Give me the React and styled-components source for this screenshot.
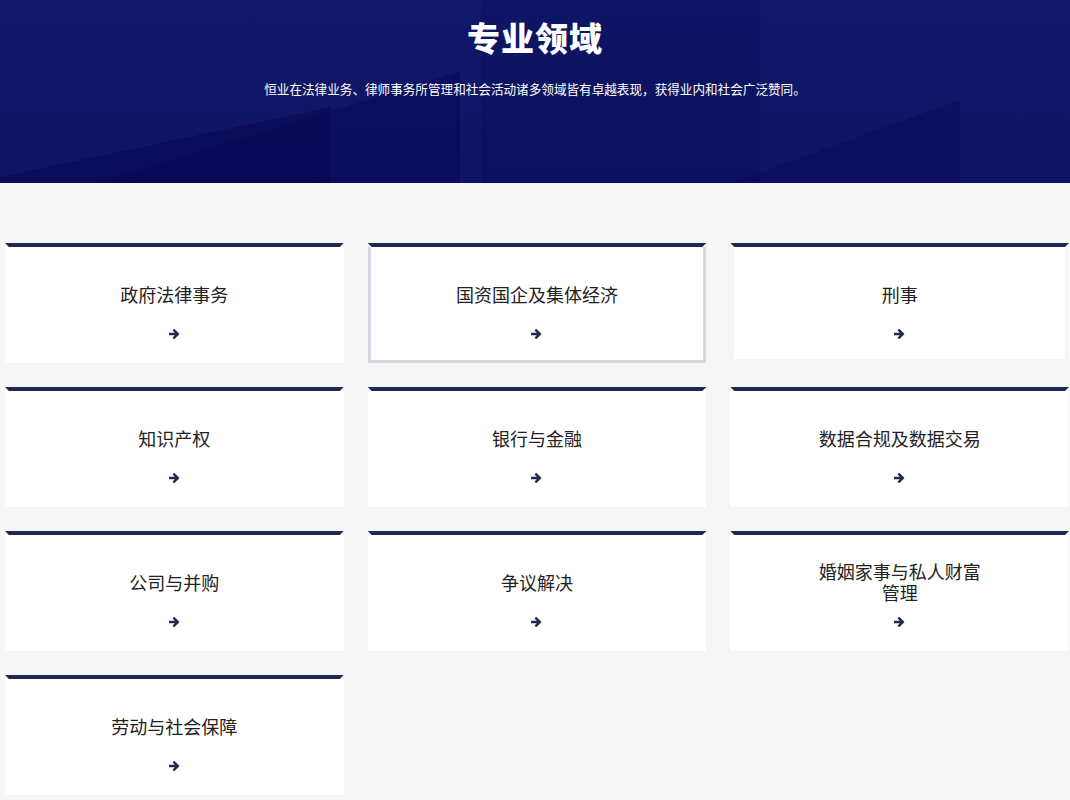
import styled, { createGlobalStyle } from 'styled-components';

const GlobalStyle = createGlobalStyle`
  body {
    margin: 0;
    background: #f6f6f6;
    font-family: "Noto Sans CJK SC", "Noto Sans", sans-serif;
  }
`;

// 领域列表
const AREAS = [
    '政府法律事务',
    '国资国企及集体经济',
    '刑事',
    '知识产权',
    '银行与金融',
    '数据合规及数据交易',
    '公司与并购',
    '争议解决',
    '婚姻家事与私人财富管理',
    '劳动与社会保障',
];

const ArrowIcon = () => (
    <svg width="11" height="10" viewBox="0 0 11 10">
        <path d="M1 5 H8.5 M5.2 1.4 L8.8 5 L5.2 8.6" fill="none" stroke="currentColor" strokeWidth="2.4" strokeLinecap="square" />
    </svg>
);

const App = () => {
    return (
        <Page>
            <GlobalStyle />
            <Hero>
                <HeroTitle>专业领域</HeroTitle>
                <HeroText>恒业在法律业务、律师事务所管理和社会活动诸多领域皆有卓越表现，获得业内和社会广泛赞同。</HeroText>
            </Hero>
            <Grid>
                {AREAS.map((name, i) => (
                    <Card key={name}>
                        <CardBody $active={i === 1} $shrink={i === 2}>
                            <CardTitle>{name}</CardTitle>
                            <Arrow><ArrowIcon /></Arrow>
                        </CardBody>
                    </Card>
                ))}
            </Grid>
        </Page>
    );
};

const Page = styled.div`
  min-height: 800px;
  background: #f6f6f6;
`;

//상단 배너
const Hero = styled.header`
  height: 183px;
  box-sizing: border-box;
  padding-top: 13px;
  text-align: center;
  color: #fff;
  background:
    linear-gradient(168deg, transparent 0 70%, rgba(6, 4, 80, 0.5) 70% 100%) 0 0 / 330px 100% no-repeat,
    linear-gradient(163deg, transparent 0 62%, rgba(8, 4, 86, 0.5) 62% 100%) 100px 0 / 360px 100% no-repeat,
    linear-gradient(160deg, transparent 0 70%, rgba(8, 4, 86, 0.4) 70% 100%) 700px 0 / 260px 100% no-repeat,
    linear-gradient(90deg, rgba(255,255,255,0.01) 0 45%, rgba(0,0,40,0.05) 45% 71%, rgba(255,255,255,0.01) 71% 100%),
    linear-gradient(180deg, #0f1669 0%, #0d1464 60%, #0c1161 100%);
`;

const HeroTitle = styled.h1`
  margin: 0;
  font-size: 33px;
  line-height: 48px;
  font-weight: 900;
  letter-spacing: 1px;
`;

const HeroText = styled.p`
  margin: 19px 0 0;
  font-size: 12.6px;
  line-height: 18px;
`;

const Grid = styled.section`
  display: grid;
  grid-template-columns: repeat(3, 1fr);
  gap: 24px;
  padding: 60px 1px 0 5px;
`;

const Card = styled.div`
  height: 120px;
  display: flex;
  flex-direction: column;
  &::before {
    content: '';
    display: block;
    height: 4px;
    background: #1c2a4f;
    clip-path: polygon(0 0, 100% 0, calc(100% - 4px) 100%, 4px 100%);
  }
`;

const CardBody = styled.div`
  flex: 1;
  background: #fff;
  display: flex;
  flex-direction: column;
  align-items: center;
  box-sizing: border-box;
  padding-top: 27px;
  border: ${p => (p.$active ? '3px solid #d6d8e1' : 'none')};
  border-top: none;
  margin: ${p => (p.$shrink ? '0 4px 4px' : '0')};
`;

const CardTitle = styled.div`
  height: 40px;
  max-width: 170px;
  display: flex;
  align-items: center;
  justify-content: center;
  text-align: center;
  font-size: 18px;
  line-height: 21px;
  color: #222;
`;

const Arrow = styled.div`
  margin-top: 15px;
  height: 10px;
  line-height: 0;
  color: #1c2a4f;
`;

export default App;
